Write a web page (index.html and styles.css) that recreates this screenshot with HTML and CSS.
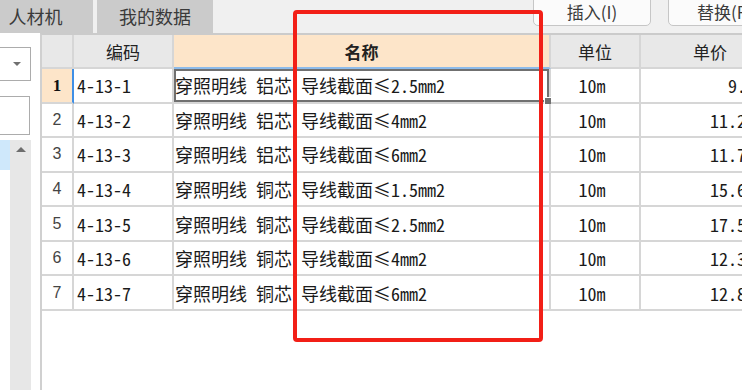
FILE: index.html
```html
<!DOCTYPE html>
<html lang="zh-CN">
<head>
<meta charset="utf-8">
<title>人材机</title>
<link rel="stylesheet" href="styles.css">
</head>
<body>
<div class="app">
  <div class="topbar">
    <div class="tab tab-first">人材机</div>
    <div class="tab tab-second">我的数据</div>
    <div class="spacer"></div>
    <div class="btn btn-insert">插入(I)</div>
    <div class="btn btn-replace">替换(R)</div>
  </div>
  <div class="main">
    <div class="side">
      <div class="select"><span class="caret"></span></div>
      <div class="input"></div>
      <div class="tree">
        <div class="tree-sel"></div>
        <div class="scroll"><span class="scroll-up"></span></div>
      </div>
    </div>
    <div class="grid">
      <div class="row head">
        <div class="cell num"></div>
        <div class="cell">编码</div>
        <div class="cell name-head">名称</div>
        <div class="cell">单位</div>
        <div class="cell">单价</div>
      </div>
      <div class="row current">
        <div class="cell num num-current">1</div>
        <div class="cell code">4-13-1</div>
        <div class="cell name name-current">穿照明线 铝芯 导线截面<span class="le">≤</span>2.5mm2</div>
        <div class="cell unit">10m</div>
        <div class="cell price">9.5</div>
      </div>
      <div class="row">
        <div class="cell num">2</div>
        <div class="cell code">4-13-2</div>
        <div class="cell name">穿照明线 铝芯 导线截面<span class="le">≤</span>4mm2</div>
        <div class="cell unit">10m</div>
        <div class="cell price">11.24</div>
      </div>
      <div class="row">
        <div class="cell num">3</div>
        <div class="cell code">4-13-3</div>
        <div class="cell name">穿照明线 铝芯 导线截面<span class="le">≤</span>6mm2</div>
        <div class="cell unit">10m</div>
        <div class="cell price">11.70</div>
      </div>
      <div class="row">
        <div class="cell num">4</div>
        <div class="cell code">4-13-4</div>
        <div class="cell name">穿照明线 铜芯 导线截面<span class="le">≤</span>1.5mm2</div>
        <div class="cell unit">10m</div>
        <div class="cell price">15.63</div>
      </div>
      <div class="row">
        <div class="cell num">5</div>
        <div class="cell code">4-13-5</div>
        <div class="cell name">穿照明线 铜芯 导线截面<span class="le">≤</span>2.5mm2</div>
        <div class="cell unit">10m</div>
        <div class="cell price">17.55</div>
      </div>
      <div class="row">
        <div class="cell num">6</div>
        <div class="cell code">4-13-6</div>
        <div class="cell name">穿照明线 铜芯 导线截面<span class="le">≤</span>4mm2</div>
        <div class="cell unit">10m</div>
        <div class="cell price">12.32</div>
      </div>
      <div class="row">
        <div class="cell num">7</div>
        <div class="cell code">4-13-7</div>
        <div class="cell name">穿照明线 铜芯 导线截面<span class="le">≤</span>6mm2</div>
        <div class="cell unit">10m</div>
        <div class="cell price">12.86</div>
      </div>
    </div>
  </div>
  <div class="highlight"></div>
</div>
</body>
</html>
```

FILE: styles.css
```css
* { box-sizing: border-box; }

html, body {
  margin: 0;
  padding: 0;
  width: 742px;
  height: 390px;
  overflow: hidden;
  background: #ffffff;
  font-family: "Noto Sans CJK SC", "Noto Sans", sans-serif;
  color: #1a1a1a;
}

.app {
  position: relative;
  width: 742px;
  height: 390px;
  display: flex;
  flex-direction: column;
  overflow: hidden;
}

/* ---------- top bar ---------- */
.topbar {
  height: 33px;
  flex: none;
  display: flex;
  align-items: flex-start;
  background: #f0f0f0;
}

.tab {
  height: 33px;
  display: flex;
  align-items: center;
  justify-content: center;
  background: #cbcbcb;
  color: #3a3a3a;
  font-size: 18px;
  line-height: 1;
  padding-bottom: 2px;
}

.tab-first {
  width: 115px;
  margin-left: -22px;
  margin-right: 4px;
}

.tab-second {
  width: 116px;
}

.spacer { flex: 1; }

.btn {
  flex: none;
  height: 32px;
  margin-top: -6px;
  border: 1px solid #c6c6c6;
  border-radius: 5px;
  background: #fbfbfb;
  color: #3a3a3a;
  font-size: 17px;
  line-height: 1;
  display: flex;
  align-items: center;
  justify-content: center;
  padding-top: 3px;
}

.btn-insert {
  width: 118px;
  margin-right: 17px;
}

.btn-replace {
  width: 110px;
  margin-right: -36px;
  justify-content: flex-start;
  padding-left: 28px;
}

/* ---------- main ---------- */
.main {
  flex: 1;
  display: flex;
  min-height: 0;
}

.side {
  width: 40px;
  flex: none;
  display: flex;
  flex-direction: column;
  background: #ffffff;
}

.select {
  margin-top: 14px;
  margin-left: -2px;
  width: 33px;
  height: 34px;
  border: 1px solid #acacac;
  position: relative;
  display: flex;
  align-items: center;
  justify-content: flex-end;
  padding-right: 9px;
}

.caret {
  width: 0;
  height: 0;
  border-left: 4px solid transparent;
  border-right: 4px solid transparent;
  border-top: 4px solid #707070;
}

.input {
  margin-top: 15px;
  margin-left: -2px;
  width: 32px;
  height: 39px;
  border: 1px solid #acacac;
}

.tree {
  margin-top: 5px;
  flex: 1;
  display: flex;
  width: 31px;
}

.tree-sel {
  width: 10px;
  height: 30px;
  background: #cfe8fb;
}

.scroll {
  width: 21px;
  background: #e7e7e7;
  display: flex;
  justify-content: center;
  padding-top: 7px;
}

.scroll-up {
  width: 0;
  height: 0;
  border-left: 5px solid transparent;
  border-right: 5px solid transparent;
  border-bottom: 5px solid #6d6d6d;
}

/* ---------- grid ---------- */
.grid {
  flex: 1;
  min-width: 0;
  overflow: hidden;
  border-left: 2px solid #d0d0d0;
  border-top: 2px solid #cbcbcb;
  background: #ffffff;
}

.row {
  display: grid;
  grid-template-columns: 32px 100px 377px 90px 140px;
  height: 34.57px;
}

.row.head {
  height: 34px;
}

.cell {
  position: relative;
  border-right: 2px solid #d6d6d6;
  border-bottom: 2px solid #d6d6d6;
  display: flex;
  align-items: center;
  white-space: nowrap;
  overflow: hidden;
  font-size: 18px;
  line-height: 1;
  font-feature-settings: "hwid" 1;
}

.head .cell {
  background: #e8e8e8;
  justify-content: center;
  font-size: 17px;
  color: #222222;
}

.head .name-head {
  background: #fde5c9;
  font-weight: bold;
  border-bottom-color: #8dbbea;
}

.num {
  justify-content: center;
  font-family: "Liberation Sans", "DejaVu Sans", sans-serif;
  font-size: 16px;
  color: #444444;
  font-feature-settings: normal;
}

.num-current {
  background: #fde5c9;
  font-family: "Liberation Serif", serif;
  font-weight: bold;
  font-size: 17px;
  color: #111111;
  border-right-color: #3f8fe6;
}

.code {
  padding-left: 3px;
}

.name {
  padding-left: 1px;
}

.le {
  font-feature-settings: normal;
}

.name-current {
  box-shadow: inset 0 0 0 2px #707070;
  overflow: visible;
}

.name-current::after {
  content: "";
  position: absolute;
  right: -3px;
  bottom: -3px;
  width: 6px;
  height: 6px;
  background: #707070;
  border: 1px solid #ffffff;
}

.unit {
  justify-content: center;
  padding-right: 6px;
}

.price {
  justify-content: flex-end;
  padding-right: 24px;
}

/* ---------- red annotation frame ---------- */
.highlight {
  position: absolute;
  left: 293px;
  top: 10px;
  width: 250px;
  height: 332px;
  border: 4.5px solid #f21f17;
  border-radius: 4px;
  pointer-events: none;
}
```
